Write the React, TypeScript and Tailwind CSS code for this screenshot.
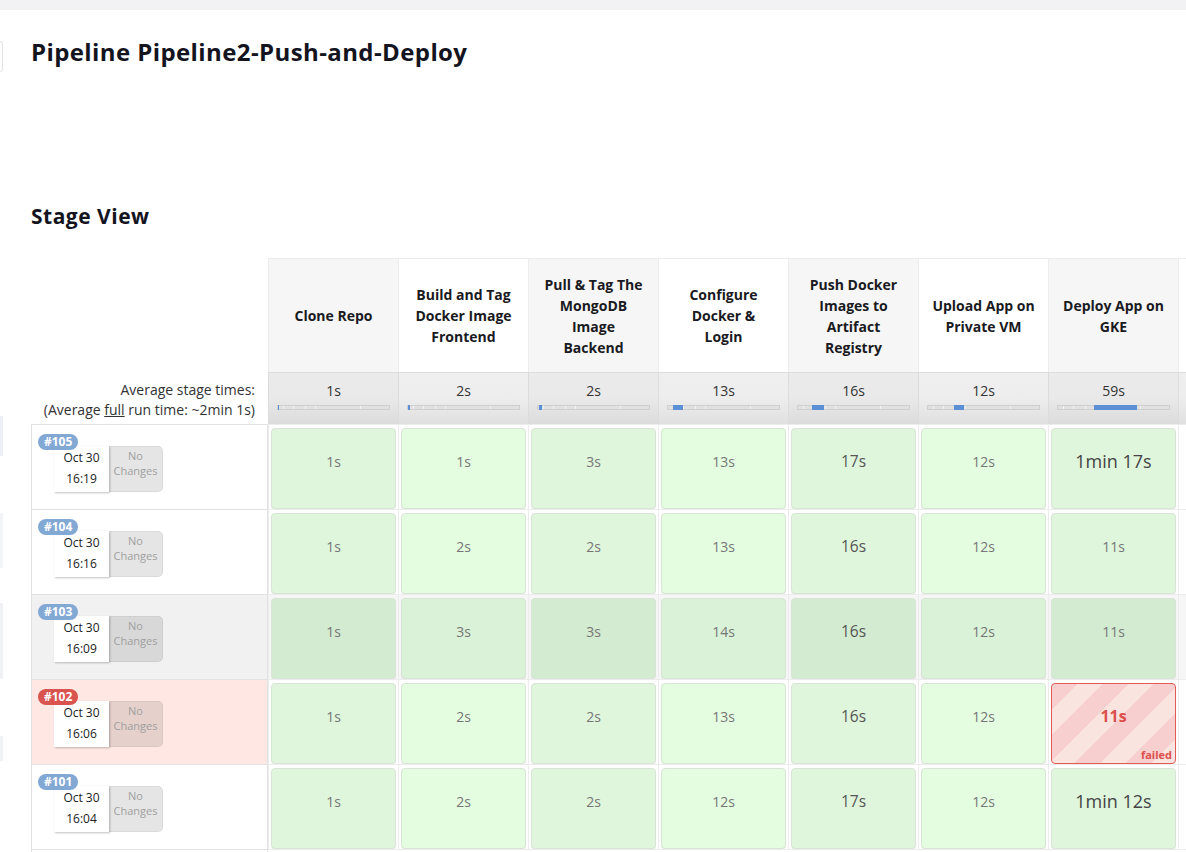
import React from 'react';

type Run = {
  id: string;
  date: string;
  time: string;
  rowBg: string;
  badge: string;
  times: string[];
  failedAt?: number;
  hover?: boolean;
};

const stages = [
  ['Clone Repo'],
  ['Build and Tag', 'Docker Image', 'Frontend'],
  ['Pull & Tag The', 'MongoDB', 'Image', 'Backend'],
  ['Configure', 'Docker &', 'Login'],
  ['Push Docker', 'Images to', 'Artifact', 'Registry'],
  ['Upload App on', 'Private VM'],
  ['Deploy App on', 'GKE'],
  [],
];

const avgTimes = ['1s', '2s', '2s', '13s', '16s', '12s', '59s', ''];
// left offset / width of the blue part of each average bar (px)
const avgBars: [number, number][] = [
  [0, 1],
  [0, 2],
  [1, 3],
  [5, 10],
  [14, 12],
  [26, 10],
  [36, 43],
];
const ticks = [5, 15, 27, 37, 82];

const runs: Run[] = [
  { id: '#105', date: 'Oct 30', time: '16:19', rowBg: 'bg-white', badge: 'bg-[#82a8d4]', times: ['1s', '1s', '3s', '13s', '17s', '12s', '1min 17s'] },
  { id: '#104', date: 'Oct 30', time: '16:16', rowBg: 'bg-white', badge: 'bg-[#82a8d4]', times: ['1s', '2s', '2s', '13s', '16s', '12s', '11s'] },
  { id: '#103', date: 'Oct 30', time: '16:09', rowBg: 'bg-[#f1f1f1]', badge: 'bg-[#82a8d4]', times: ['1s', '3s', '3s', '14s', '16s', '12s', '11s'], hover: true },
  { id: '#102', date: 'Oct 30', time: '16:06', rowBg: 'bg-[#ffe8e3]', badge: 'bg-[#d9534f]', times: ['1s', '2s', '2s', '13s', '16s', '12s', '11s'], failedAt: 6 },
  { id: '#101', date: 'Oct 30', time: '16:04', rowBg: 'bg-white', badge: 'bg-[#82a8d4]', times: ['1s', '2s', '2s', '12s', '17s', '12s', '1min 12s'] },
];

const timeStyle = (t: string) => {
  if (t.includes('min')) return 'text-[18px] text-[#444]';
  if (t === '16s' || t === '17s') return 'text-[15.5px] text-[#555]';
  return 'text-[14px] text-[#777]';
};

const cellBg = (col: number, hover?: boolean) => {
  const odd = col % 2 === 0;
  if (hover) return odd ? 'bg-[#d3ebd0]' : 'bg-[#daf2d7]';
  return odd ? 'bg-[#dff6dc]' : 'bg-[#e4fde1]';
};

const AvgBar: React.FC<{ bar?: [number, number] }> = ({ bar }) => (
  <div className="relative mx-auto mt-[4px] h-[5px] w-[113px] border border-[#cfcfcf] bg-[#e0e0e0]">
    {ticks.map((t) => (
      <div key={t} className="absolute top-0 h-full w-px bg-[#f2f2f2]" style={{ left: t }} />
    ))}
    {bar && (
      <div className="absolute top-[-1px] h-[5px] bg-[#5b8fd6]" style={{ left: bar[0], width: bar[1] }} />
    )}
  </div>
);

const StageCell: React.FC<{ t?: string; col: number; hover?: boolean; failed?: boolean }> = ({ t, col, hover, failed }) => {
  if (!t) return <div className="h-[81px]" />;
  if (failed) {
    return (
      <div className="relative flex h-[81px] items-center justify-center rounded-[4px] border border-[#e25a55] bg-[repeating-linear-gradient(135deg,#f8cfcf_0px,#f8cfcf_18px,#fae4e0_18px,#fae4e0_36px)] pb-[15px]">
        <span className="text-[16px] font-bold text-[#dc4f4b]">{t}</span>
        <span className="absolute bottom-[3px] right-[3px] text-[11px] font-bold leading-none text-[#dc4f4b]">failed</span>
      </div>
    );
  }
  return (
    <div className={`flex h-[81px] items-center justify-center rounded-[4px] border border-[#d8e4d5] pb-[14px] shadow-[0_1px_1px_rgba(0,0,0,0.06)] ${cellBg(col, hover)}`}>
      <span className={timeStyle(t)}>{t}</span>
    </div>
  );
};

const RunRow: React.FC<{ run: Run }> = ({ run }) => (
  <div className="flex h-[85px]">
    <div className={`relative w-[237px] shrink-0 border-x border-t border-[#e2e2e2] ${run.rowBg}`}>
      <div className="ml-[22px] mt-[21px] flex">
        <div className="flex h-[46px] w-[55px] flex-col items-center bg-white pt-[1px] text-[12px] leading-[21px] text-[#222] shadow-[1px_1px_2px_rgba(0,0,0,0.25)]">
          <span>{run.date}</span>
          <span>{run.time}</span>
        </div>
        <div className="flex h-[46px] w-[54px] flex-col items-center rounded-r-[5px] border border-l-0 border-black/5 bg-black/10 pt-[1px] text-[11px] leading-[15px] text-[#a0a0a0]">
          <span>No</span>
          <span>Changes</span>
        </div>
      </div>
      <span className={`absolute left-[6px] top-[9px] rounded-full px-[6px] text-[12px] font-bold leading-[16px] text-white ${run.badge}`}>
        {run.id}
      </span>
    </div>
    {stages.map((_, i) => (
      <div
        key={i}
        className={`w-[130px] shrink-0 border-l border-t border-[#ececec] px-[2px] pt-[3px] ${run.hover ? 'bg-[#f6f6f6]' : 'bg-white'}`}
      >
        <StageCell t={run.times[i]} col={i} hover={run.hover} failed={run.failedAt === i} />
      </div>
    ))}
  </div>
);

const App: React.FC = () => {
  return (
    <div className="h-[852px] w-[1186px] overflow-hidden bg-white font-['Open_Sans',sans-serif] text-[#14141f]">
      <div className="h-[10px] bg-[#f2f2f4]" />
      <div className="flex">
        {/* cut-off side bar */}
        <div className="flex w-[3px] shrink-0 flex-col">
          <div className="mt-[31px] h-[31px] rounded-r-[3px] border border-l-0 border-[#e3e3e8]" />
          <div className="mt-[344px] h-[40px] bg-[#eff0f5]" />
          <div className="mt-[57px] h-[55px] bg-[#f3f4f8]" />
          <div className="mt-[35px] h-[76px] bg-[#f1f2f6]" />
          <div className="mt-[57px] h-[25px] bg-[#f1f2f6]" />
        </div>

        <div className="min-w-0 flex-1 pl-[28px]">
          <h1 className="mt-[26px] text-[24px] font-bold leading-[32px] tracking-[0.4px]">Pipeline Pipeline2-Push-and-Deploy</h1>
          <h2 className="mt-[134px] text-[21px] font-bold leading-[28px] tracking-[0.5px]">Stage View</h2>

          <div className="mt-[28px] w-max">
            {/* stage names */}
            <div className="flex h-[114px]">
              <div className="w-[237px] shrink-0" />
              {stages.map((lines, i) => (
                <div
                  key={i}
                  className={`flex w-[130px] shrink-0 flex-col items-center justify-center border-l border-t border-[#ececec] text-center text-[14px] font-bold leading-[21px] text-[#1a1a22] ${i % 2 === 0 ? 'bg-[#f6f6f6]' : 'bg-white'}`}
                >
                  {lines.map((l) => (
                    <span key={l}>{l}</span>
                  ))}
                </div>
              ))}
            </div>

            {/* average times */}
            <div className="flex h-[52px]">
              <div className="w-[237px] shrink-0 pr-[13px] pt-[8px] text-right text-[14px] leading-[20px] text-[#333]">
                <div>Average stage times:</div>
                <div>
                  (Average <span className="underline">full</span> run time: ~2min 1s)
                </div>
              </div>
              {avgTimes.map((t, i) => (
                <div
                  key={i}
                  className={`w-[130px] shrink-0 border-l border-t border-[#dcdcdc] pt-[8px] text-center text-[14px] leading-[20px] text-[#333] ${i % 2 === 0 ? 'bg-linear-to-b from-[#ebebeb] via-[#e9e9e9] to-[#dcdcdc]' : 'bg-linear-to-b from-[#efefef] via-[#ededed] to-[#e0e0e0]'}`}
                >
                  <div className="h-[20px]">{t}</div>
                  <AvgBar bar={avgBars[i]} />
                </div>
              ))}
            </div>

            {runs.map((r) => (
              <RunRow key={r.id} run={r} />
            ))}
            <div className="flex">
              <div className="h-[4px] w-[237px] border-x border-t border-[#e2e2e2]" />
              <div className="h-[4px] w-[1040px] border-t border-[#ececec]" />
            </div>
          </div>
        </div>
      </div>
    </div>
  );
};

export default App;
